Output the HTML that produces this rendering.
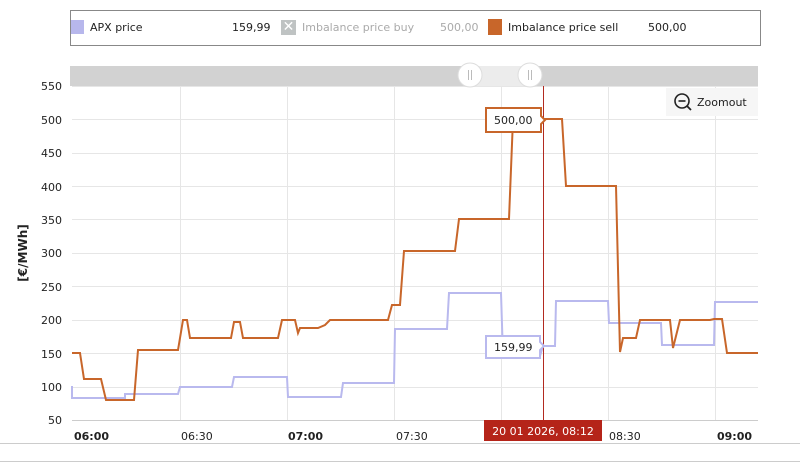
<!DOCTYPE html>
<html><head><meta charset="utf-8"><style>
body{margin:0;width:800px;height:463px;background:#fff;font-family:"DejaVu Sans","Liberation Sans",sans-serif;overflow:hidden;position:relative}
.t{position:absolute;font-size:11px;color:#222}
</style></head><body>
<div style="position:absolute;left:70px;top:10px;width:689px;height:34px;border:1px solid #888"></div>
<div style="position:absolute;left:71px;top:20px;width:13px;height:14px;background:#b7b7ec"></div>
<div class="t" style="left:90px;top:21px">APX price</div>
<div class="t" style="left:232px;top:21px">159,99</div>
<div style="position:absolute;left:281px;top:20px;width:15px;height:15px;background:#bfc3c3;color:#fff;font-size:14px;line-height:15px;text-align:center;font-weight:bold">✕</div>
<div class="t" style="left:302px;top:21px;color:#aaa">Imbalance price buy</div>
<div class="t" style="left:440px;top:21px;color:#aaa">500,00</div>
<div style="position:absolute;left:488px;top:19px;width:14px;height:16px;background:#c8662a"></div>
<div class="t" style="left:508px;top:21px">Imbalance price sell</div>
<div class="t" style="left:648px;top:21px">500,00</div>
<div style="position:absolute;left:70px;top:66px;width:688px;height:20px;background:#d2d2d2"></div>
<div style="position:absolute;left:470px;top:66px;width:60px;height:20px;background:#ececec"></div>
<svg width="800" height="463" style="position:absolute;left:0;top:0">
<g stroke="#e6e6e6" stroke-width="1">
<line x1="72" y1="86.5" x2="758" y2="86.5"/><line x1="72" y1="119.5" x2="758" y2="119.5"/><line x1="72" y1="153.5" x2="758" y2="153.5"/><line x1="72" y1="186.5" x2="758" y2="186.5"/><line x1="72" y1="219.5" x2="758" y2="219.5"/><line x1="72" y1="253.5" x2="758" y2="253.5"/><line x1="72" y1="286.5" x2="758" y2="286.5"/><line x1="72" y1="320.5" x2="758" y2="320.5"/><line x1="72" y1="353.5" x2="758" y2="353.5"/><line x1="72" y1="387.5" x2="758" y2="387.5"/>
<line x1="180.5" y1="86" x2="180.5" y2="420"/><line x1="287.5" y1="86" x2="287.5" y2="420"/><line x1="394.5" y1="86" x2="394.5" y2="420"/><line x1="501.5" y1="86" x2="501.5" y2="420"/><line x1="608.5" y1="86" x2="608.5" y2="420"/><line x1="715.5" y1="86" x2="715.5" y2="420"/>
</g>
<line x1="72" y1="420.5" x2="758" y2="420.5" stroke="#ccc"/>
<line x1="0" y1="443.5" x2="800" y2="443.5" stroke="#ccc"/>
<line x1="0" y1="461.5" x2="800" y2="461.5" stroke="#ccc"/>
<polyline fill="none" stroke="#b9b9ee" stroke-width="2" points="72,386 72,398 125,398 125,394 178,394 180,387 232,387 234,377 287,377 288,397 341,397 343,383 394,383 395,329 447,329 449,293 501,293 503,356 540,356 543,346 555,346 556,301 608,301 609,323 661,323 662,345 714,345 715,302 758,302"/>
<polyline fill="none" stroke="#c8662a" stroke-width="2" points="72,353 80,353 84,379 101,379 106,400 134,400 138,350 178,350 183,320 187,320 190,338 231,338 234,322 240,322 243,338 278,338 282,320 295,320 298,333 300,328 318,328 325,325 330,320 388,320 392,305 400,305 404,251 455,251 459,219 509,219 513,119 562,119 566,186 616,186 620,352 623,338 636,338 640,320 670,320 673,348 680,320 710,320 714,319 722,319 727,353 758,353"/>
<line x1="543.5" y1="86" x2="543.5" y2="420" stroke="#b22a20" stroke-width="1"/>
<path d="M486,108 H541 V116 L545,120 L541,124 V132 H486 Z" fill="#fff" stroke="#c8662a" stroke-width="2"/>
<text x="494" y="124" font-size="11" fill="#222" font-family="DejaVu Sans,sans-serif">500,00</text>
<path d="M486,336 H540 V342 L544,346 L540,350 V358 H486 Z" fill="#fff" stroke="#b9b9ee" stroke-width="2"/>
<text x="494" y="351" font-size="11" fill="#222" font-family="DejaVu Sans,sans-serif">159,99</text>
<circle cx="470" cy="75" r="12" fill="#fff" stroke="#ddd"/><circle cx="530" cy="75" r="12" fill="#fff" stroke="#ddd"/>
<g stroke="#bbb"><line x1="468.5" y1="70" x2="468.5" y2="80"/><line x1="471.5" y1="70" x2="471.5" y2="80"/><line x1="528.5" y1="70" x2="528.5" y2="80"/><line x1="531.5" y1="70" x2="531.5" y2="80"/></g>
<rect x="666" y="88" width="92" height="28" fill="#f6f6f6"/>
<circle cx="682" cy="101" r="7" fill="none" stroke="#222" stroke-width="1.6"/>
<line x1="678.5" y1="101" x2="685.5" y2="101" stroke="#222" stroke-width="1.6"/>
<line x1="687" y1="106" x2="691" y2="110" stroke="#222" stroke-width="1.8"/>
<text x="697" y="106" font-size="11" fill="#222" font-family="DejaVu Sans,sans-serif">Zoomout</text>
<g font-size="11" fill="#222" font-family="DejaVu Sans,sans-serif" text-anchor="end">
<text x="62" y="90">550</text><text x="62" y="124">500</text><text x="62" y="157">450</text><text x="62" y="191">400</text><text x="62" y="224">350</text><text x="62" y="257">300</text><text x="62" y="291">250</text><text x="62" y="324">200</text><text x="62" y="358">150</text><text x="62" y="391">100</text><text x="62" y="424">50</text>
</g>
<text transform="translate(27,253) rotate(-90)" font-size="12" font-weight="bold" fill="#222" text-anchor="middle" font-family="DejaVu Sans,sans-serif">[€/MWh]</text>
<g font-size="11" fill="#222" font-family="DejaVu Sans,sans-serif">
<text x="74" y="440" font-weight="bold">06:00</text><text x="181" y="440">06:30</text><text x="288" y="440" font-weight="bold">07:00</text><text x="396" y="440">07:30</text><text x="609" y="440">08:30</text><text x="717" y="440" font-weight="bold">09:00</text>
</g>
<rect x="484" y="420" width="118" height="21" fill="#b52419"/>
<text x="543" y="435" font-size="11" fill="#fff" text-anchor="middle" font-family="DejaVu Sans,sans-serif">20 01 2026, 08:12</text>
</svg>
</body></html>
